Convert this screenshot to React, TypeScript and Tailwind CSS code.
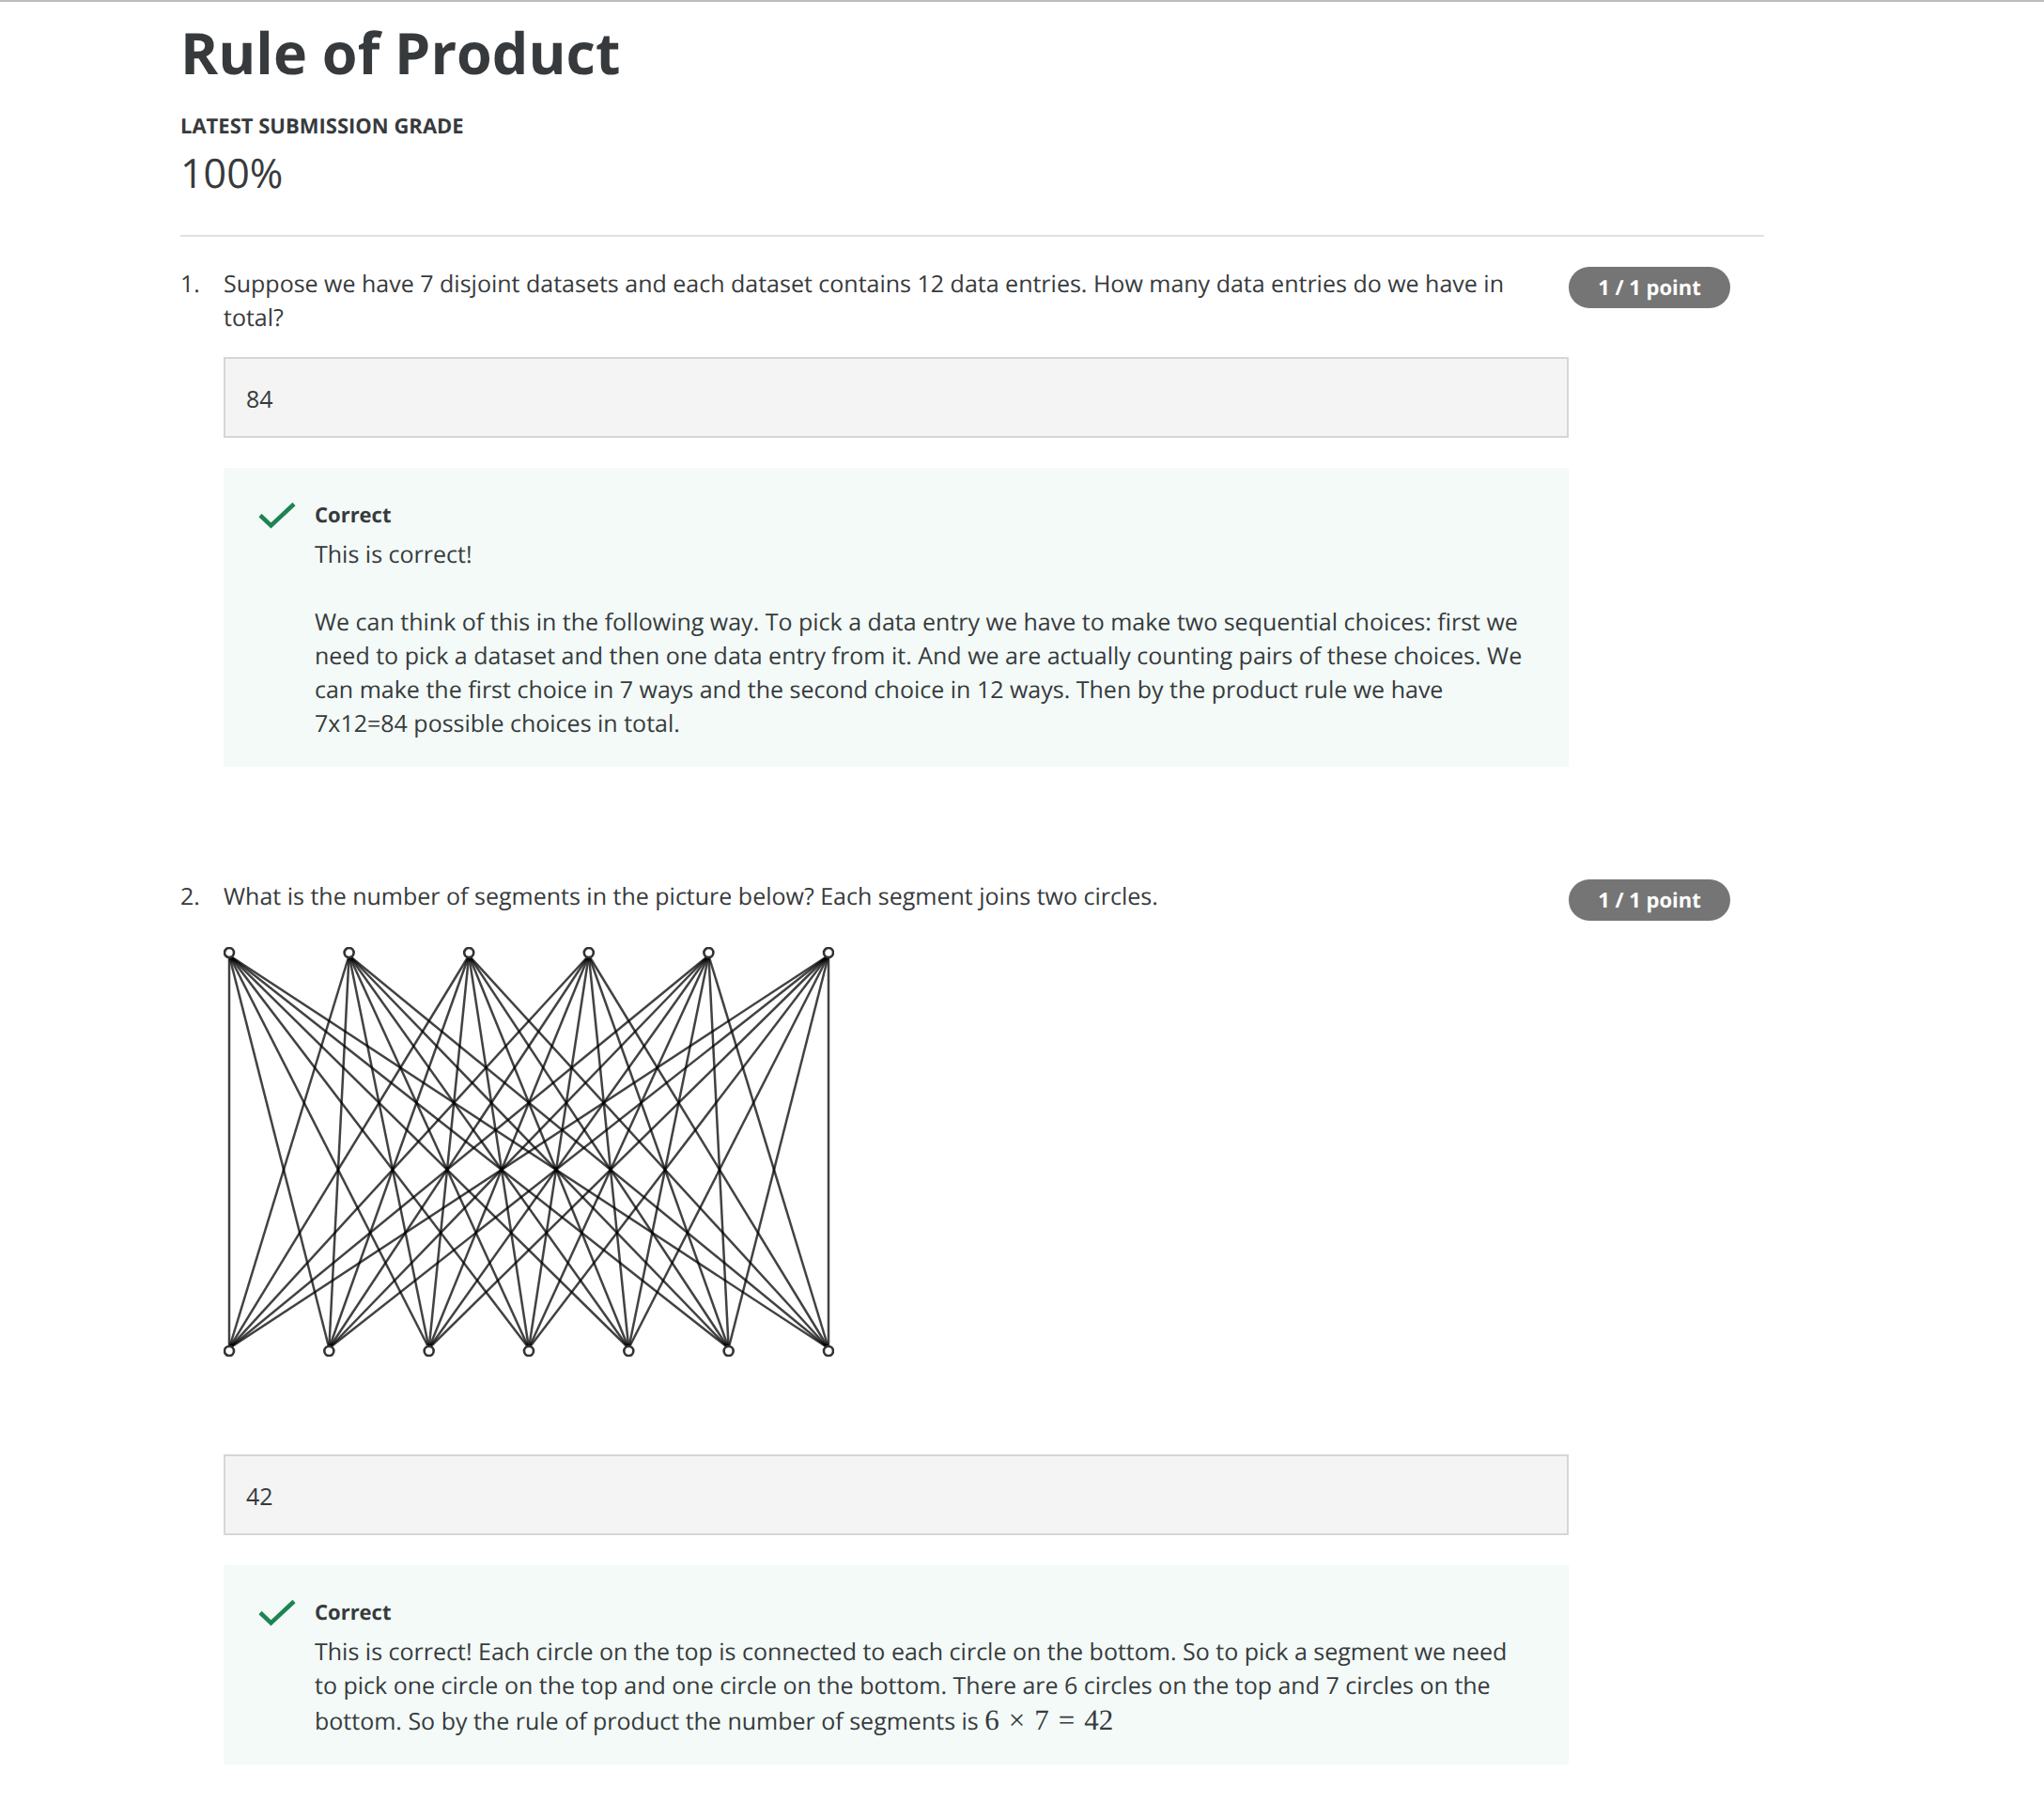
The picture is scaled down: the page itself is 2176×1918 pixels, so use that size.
import type { ReactNode } from "react";

const TOP_COUNT = 6;
const BOTTOM_COUNT = 7;
const LEFT = 6;
const SPAN = 638;

const topNodes = Array.from({ length: TOP_COUNT }, (_, i) => LEFT + (i * SPAN) / (TOP_COUNT - 1));
const bottomNodes = Array.from({ length: BOTTOM_COUNT }, (_, i) => LEFT + (i * SPAN) / (BOTTOM_COUNT - 1));

function SegmentsDrawing() {
  return (
    <svg
      viewBox="0 0 650 436"
      className="mt-9 block h-[436px] w-[650px]"
      role="img"
      aria-label="Six circles on the top, each joined to seven circles on the bottom"
    >
      <g stroke="#000" strokeOpacity="0.74" strokeWidth="2.5">
        {topNodes.map((x1) =>
          bottomNodes.map((x2) => <line key={`${x1}-${x2}`} x1={x1} y1={9} x2={x2} y2={427} />),
        )}
      </g>
      <g fill="#fff" stroke="#333" strokeWidth="2.6">
        {topNodes.map((x) => (
          <circle key={x} cx={x} cy={6} r={5} />
        ))}
        {bottomNodes.map((x) => (
          <circle key={x} cx={x} cy={430} r={5} />
        ))}
      </g>
    </svg>
  );
}

function Check() {
  return (
    <svg viewBox="0 0 40 30" className="mt-1 h-[30px] w-10 shrink-0" aria-hidden="true">
      <path d="M2 14.5 L13.5 25.5 L38 2.5" fill="none" stroke="#1f8354" strokeWidth="4.5" />
    </svg>
  );
}

type QuestionProps = {
  number: number;
  prompt: string;
  answer: string;
  picture?: ReactNode;
  children: ReactNode;
};

function Question({ number, prompt, answer, picture, children }: QuestionProps) {
  const id = `answer-${number}`;
  return (
    <section className="flex items-start">
      <span className="w-[46px] shrink-0">{number}.</span>
      <div className="min-w-0 flex-1">
        <label htmlFor={id} className="block pr-10">
          {prompt}
        </label>
        {picture}
        <input
          id={id}
          type="text"
          readOnly
          defaultValue={answer}
          className={`block h-[86px] w-full border-2 border-[#d6d6d6] bg-[#f4f4f4] px-[22px] pt-0.5 outline-none ${
            picture ? "mt-[104px]" : "mt-6"
          }`}
        />
        <div className="mt-8 flex gap-5 bg-[#f3faf8] pt-8 pr-10 pb-7 pl-[37px]">
          <Check />
          <div>
            <h2 className="text-[22px] leading-9 font-bold">Correct</h2>
            <div className="mt-1.5">{children}</div>
          </div>
        </div>
      </div>
      <div className="w-[208px] shrink-0">
        <span className="block h-11 w-[172px] rounded-full bg-[#757575] text-center text-[22px] leading-[44px] font-bold text-white">
          1 / 1 point
        </span>
      </div>
    </section>
  );
}

export default function App() {
  return (
    <main className="border-t-2 border-[#bdbdbd] bg-white pr-[298px] pb-10 pl-48 font-['Open_Sans',sans-serif] text-[25px] leading-9 text-[#373a3c] [text-rendering:geometricPrecision]">
      <header className="border-b-2 border-[#e1e1e1] pt-3.5 pb-[38px]">
        <h1 className="text-[61px] leading-[80px] font-bold">Rule of Product</h1>
        <p className="mt-[22px] text-[22px] leading-8 font-bold">LATEST SUBMISSION GRADE</p>
        <p className="mt-1.5 text-[43px] leading-[56px]">100%</p>
      </header>
      <div className="mt-8 flex flex-col gap-[120px]">
        <Question
          number={1}
          prompt="Suppose we have 7 disjoint datasets and each dataset contains 12 data entries. How many data entries do we have in total?"
          answer="84"
        >
          <p>This is correct!</p>
          <p className="mt-9">
            We can think of this in the following way. To pick a data entry we have to make two sequential choices:
            first we need to pick a dataset and then one data entry from it. And we are actually counting pairs of
            these choices. We can make the first choice in 7 ways and the second choice in 12 ways. Then by the
            product rule we have 7x12=84 possible choices in total.
          </p>
        </Question>
        <Question
          number={2}
          prompt="What is the number of segments in the picture below? Each segment joins two circles."
          answer="42"
          picture={<SegmentsDrawing />}
        >
          <p>
            This is correct! Each circle on the top is connected to each circle on the bottom. So to pick a segment we
            need to pick one circle on the top and one circle on the bottom. There are 6 circles on the top and 7
            circles on the bottom. So by the rule of product the number of segments is{" "}
            <span className="inline-flex items-baseline gap-2.5 font-['Liberation_Serif',serif] text-[31px] leading-[38px]">
              <span>6</span>
              <span>×</span>
              <span>7</span>
              <span>=</span>
              <span>42</span>
            </span>
          </p>
        </Question>
      </div>
    </main>
  );
}
